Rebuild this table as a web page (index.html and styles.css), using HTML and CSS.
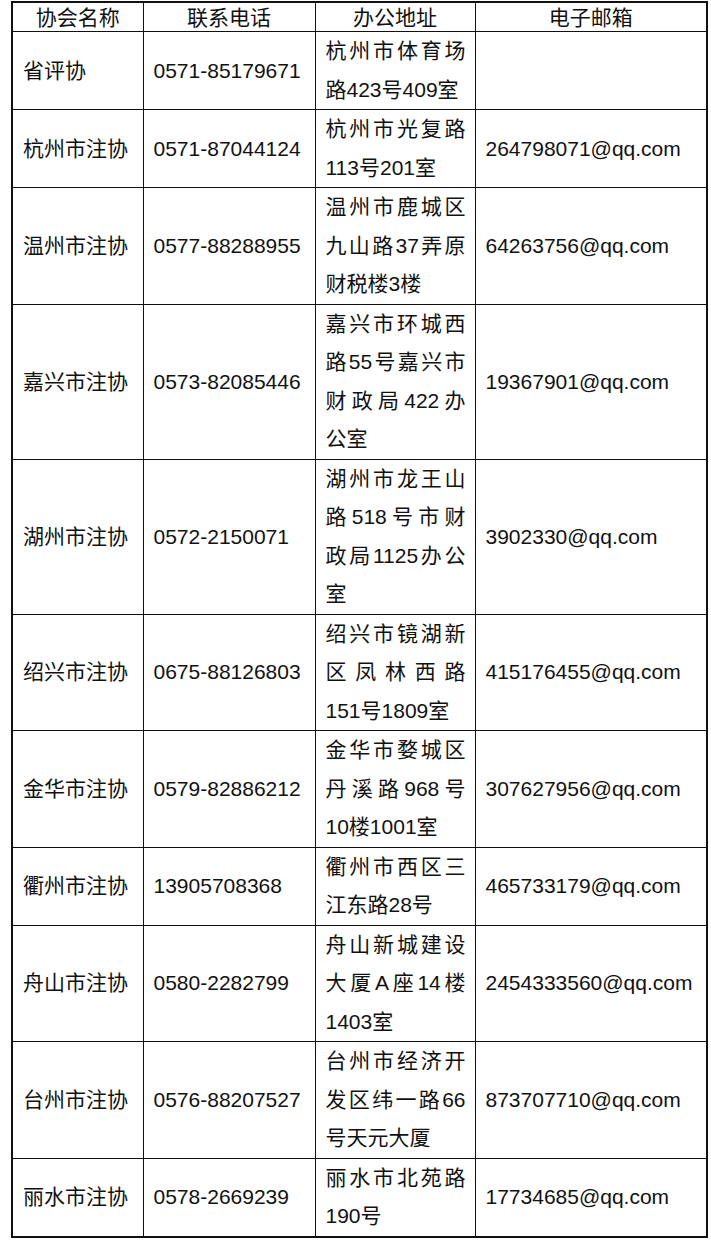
FILE: index.html
```
<!DOCTYPE html>
<html lang="zh-CN">
<head>
<meta charset="utf-8">
<title>协会联系方式</title>
<link rel="stylesheet" href="styles.css">
</head>
<body>
<table class="tbl">
<colgroup><col class="c1"><col class="c2"><col class="c3"><col class="c4"></colgroup>
<thead>
<tr><th>协会名称</th><th>联系电话</th><th>办公地址</th><th>电子邮箱</th></tr>
</thead>
<tbody>
<tr><td>省评协</td><td>0571-85179671</td><td class="addr"><span class="ln">杭州市体育场</span><span class="ln last">路423号409室</span></td><td></td></tr>
<tr><td>杭州市注协</td><td>0571-87044124</td><td class="addr"><span class="ln">杭州市光复路</span><span class="ln last">113号201室</span></td><td>264798071@qq.com</td></tr>
<tr><td>温州市注协</td><td>0577-88288955</td><td class="addr"><span class="ln">温州市鹿城区</span><span class="ln">九山路37弄原</span><span class="ln last">财税楼3楼</span></td><td>64263756@qq.com</td></tr>
<tr><td>嘉兴市注协</td><td>0573-82085446</td><td class="addr"><span class="ln">嘉兴市环城西</span><span class="ln">路55号嘉兴市</span><span class="ln">财政局422办</span><span class="ln last">公室</span></td><td>19367901@qq.com</td></tr>
<tr><td>湖州市注协</td><td>0572-2150071</td><td class="addr"><span class="ln">湖州市龙王山</span><span class="ln">路518号市财</span><span class="ln">政局1125办公</span><span class="ln last">室</span></td><td>3902330@qq.com</td></tr>
<tr><td>绍兴市注协</td><td>0675-88126803</td><td class="addr"><span class="ln">绍兴市镜湖新</span><span class="ln">区凤林西路</span><span class="ln last">151号1809室</span></td><td>415176455@qq.com</td></tr>
<tr><td>金华市注协</td><td>0579-82886212</td><td class="addr"><span class="ln">金华市婺城区</span><span class="ln">丹溪路968号</span><span class="ln last">10楼1001室</span></td><td>307627956@qq.com</td></tr>
<tr><td>衢州市注协</td><td>13905708368</td><td class="addr"><span class="ln">衢州市西区三</span><span class="ln last">江东路28号</span></td><td>465733179@qq.com</td></tr>
<tr><td>舟山市注协</td><td>0580-2282799</td><td class="addr"><span class="ln">舟山新城建设</span><span class="ln">大厦A座14楼</span><span class="ln last">1403室</span></td><td>2454333560@qq.com</td></tr>
<tr><td>台州市注协</td><td>0576-88207527</td><td class="addr"><span class="ln">台州市经济开</span><span class="ln">发区纬一路66</span><span class="ln last">号天元大厦</span></td><td>873707710@qq.com</td></tr>
<tr><td>丽水市注协</td><td>0578-2669239</td><td class="addr"><span class="ln">丽水市北苑路</span><span class="ln last">190号</span></td><td>17734685@qq.com</td></tr>
</tbody>
</table>
</body>
</html>
```
FILE: styles.css
```
html, body {
  margin: 0;
  padding: 0;
  background: #fff;
}
body {
  padding: 1px 0 0 11px;
  font-family: "Liberation Sans", "Noto Sans CJK SC", sans-serif;
  font-size: 21px;
  color: #111;
}
.tbl {
  border-collapse: collapse;
  table-layout: fixed;
  width: 695px;
  border: 2px solid #111;
}
.c1 { width: 131px; }
.c2 { width: 172px; }
.c3 { width: 160px; }
.c4 { width: 232px; }
.tbl th, .tbl td {
  border: 1px solid #111;
  vertical-align: middle;
}
.tbl th {
  font-weight: normal;
  text-align: center;
  line-height: 27px;
  height: 28px;
  padding: 0;
  overflow: hidden;
}
.tbl td {
  text-align: left;
  line-height: 38px;
  padding: 0 8px 0 10px;
  white-space: nowrap;
}
.tbl td.addr {
  padding: 0 9px 0 10px;
}
.ln {
  display: block;
  height: 38.5px;
  line-height: 38.5px;
  overflow: visible;
  text-align: justify;
  text-align-last: justify;
}
.ln.last {
  text-align-last: left;
}
```
